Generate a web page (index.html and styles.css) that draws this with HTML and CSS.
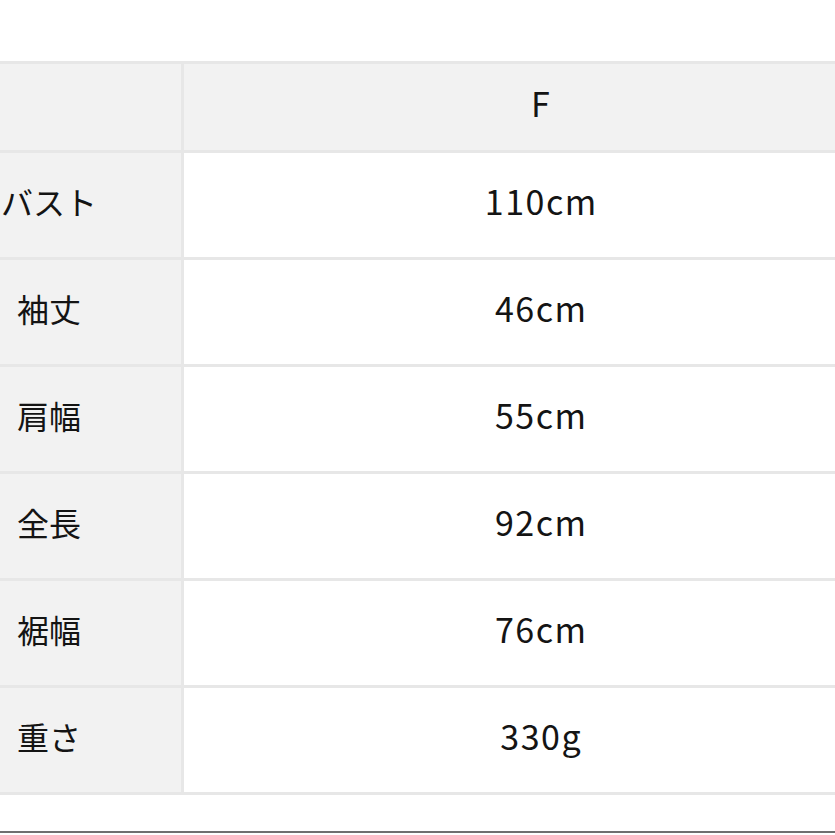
FILE: index.html
```html
<!DOCTYPE html>
<html lang="ja">
<head>
<meta charset="utf-8">
<link rel="stylesheet" href="styles.css">
</head>
<body>
<div class="page">
  <table class="size-table">
    <tr class="head">
      <th class="label"></th>
      <th class="value">F</th>
    </tr>
    <tr><th class="label">バスト</th><td class="value">110cm</td></tr>
    <tr><th class="label">袖丈</th><td class="value">46cm</td></tr>
    <tr><th class="label">肩幅</th><td class="value">55cm</td></tr>
    <tr><th class="label">全長</th><td class="value">92cm</td></tr>
    <tr><th class="label">裾幅</th><td class="value">76cm</td></tr>
    <tr><th class="label">重さ</th><td class="value">330g</td></tr>
  </table>
</div>
</body>
</html>
```
FILE: styles.css
```css
html, body {
  margin: 0;
  padding: 0;
  background: #fff;
}
body {
  width: 835px;
  height: 835px;
  overflow: hidden;
  font-family: "Noto Sans CJK JP", "Noto Sans", sans-serif;
  color: #141414;
}
.page {
  height: 833px;
  border-bottom: 2px solid #707070;
  padding-top: 61px;
  box-sizing: border-box;
  position: relative;
  overflow: hidden;
}
.size-table {
  border-collapse: collapse;
  margin-left: -86px;
  width: 986px;
  table-layout: fixed;
}
.size-table th,
.size-table td {
  border: 3px solid #e7e7e7;
  text-align: center;
  vertical-align: middle;
  font-weight: 400;
  font-size: 32px;
  line-height: 1;
  padding: 0 0 8px;
}
.size-table .label {
  width: 264px;
  background: #f2f2f2;
}
.size-table .value {
  background: #fff;
  font-size: 34px;
  letter-spacing: 1.5px;
  text-indent: 1.5px;
}
.size-table tr {
  height: 107px;
}
.size-table tr.head {
  height: 89px;
}
.size-table tr.head .value {
  background: #f2f2f2;
}
```
